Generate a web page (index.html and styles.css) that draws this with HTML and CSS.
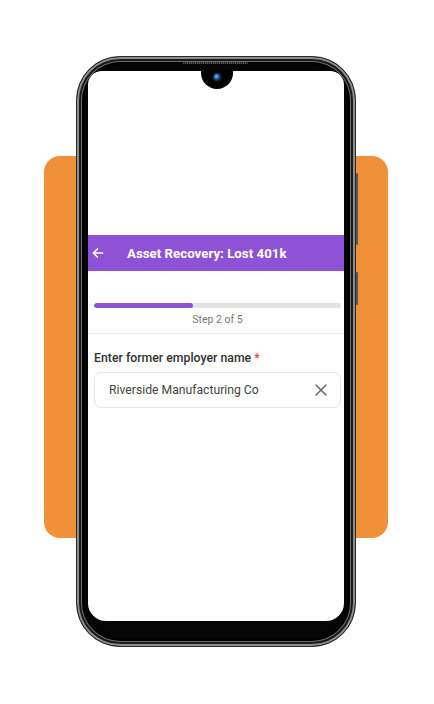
FILE: index.html
```html
<!DOCTYPE html>
<html>
<head>
<meta charset="utf-8">
<link rel="stylesheet" href="styles.css">
</head>
<body>
<div class="stage">
  <div class="backdrop"></div>
  <div class="phone">
    <div class="speaker"></div>
    <div class="side-btn btn-a"></div>
    <div class="side-btn btn-b"></div>
    <div class="screen">
      <div class="notch"><div class="camera"></div></div>
      <div class="spacer"></div>
      <div class="appbar">
        <svg class="back" width="14" height="14" viewBox="0 0 24 24"><path d="M20 12H4M11 5l-7 7 7 7" fill="none" stroke="#fff" stroke-width="2.6" stroke-linecap="round" stroke-linejoin="round"/></svg>
        <span class="title">Asset Recovery: Lost 401k</span>
      </div>
      <div class="progress-wrap">
        <div class="track"><div class="fill" style="width:40%"></div></div>
        <div class="step">Step 2 of 5</div>
      </div>
      <div class="form">
        <div class="label">Enter former employer name <span class="req">*</span></div>
        <div class="input">
          <span class="value">Riverside Manufacturing Co</span>
          <svg class="clear" width="12" height="12" viewBox="0 0 12 12"><path d="M1 1l10 10M11 1L1 11" stroke="#666" stroke-width="1.5" stroke-linecap="round"/></svg>
        </div>
      </div>
    </div>
  </div>
</div>
</body>
</html>
```
FILE: styles.css
```css
html, body { margin: 0; padding: 0; background: #fff; }
body { font-family: Roboto, "Liberation Sans", sans-serif; }
.stage {
  width: 434px; height: 704px;
  display: grid;
  grid-template-columns: 434px;
  grid-template-rows: 704px;
}
.backdrop {
  grid-area: 1 / 1;
  margin: 156px 0 0 44px;
  width: 344px; height: 382px;
  background: #f0913a;
  border-radius: 16px;
}
.phone {
  grid-area: 1 / 1;
  position: relative;
  margin: 56px 0 0 76px;
  width: 280px; height: 591px;
  box-sizing: border-box;
  border-radius: 44px;
  background: #050505;
  border: 1px solid #2a2a2a;
  box-shadow: inset 0 0 0 2px #8d8d8d, inset 0 0 0 4px #1a1a1a, inset 0 0 0 5px #6c6c6c, inset 0 0 0 7px #000;
  padding: 14px 11px 25px 11px;
  display: flex;
}
.speaker {
  position: absolute;
  left: 106px; top: 5px;
  width: 65px; height: 2px;
  background: repeating-linear-gradient(90deg, #555 0 1px, #222 1px 2px);
  border-radius: 1px;
}
.side-btn {
  position: absolute;
  right: -3px;
  width: 2px;
  background: #555;
  border-radius: 1px;
}
.btn-a { top: 116px; height: 72px; }
.btn-b { top: 215px; height: 33px; }
.screen {
  position: relative;
  flex: 1;
  background: #fff;
  border-radius: 14px 14px 18px 18px;
  overflow: hidden;
  display: flex;
  flex-direction: column;
}
.notch {
  position: absolute;
  left: 113px; top: 0;
  width: 32px; height: 18px;
  background: #000;
  border-radius: 0 0 16px 16px;
  display: flex; justify-content: center; align-items: flex-start;
}
.camera {
  margin-top: 2px;
  width: 9px; height: 9px;
  border-radius: 50%;
  background: radial-gradient(circle at 40% 40%, #5aa0e8 0 1.5px, #1d5fb0 2px, #0b2a55 4px, #111 5px);
}
.spacer { height: 164px; flex: none; }
.appbar {
  height: 36px;
  background: #8e52d6;
  display: flex; align-items: center;
  padding-left: 3px;
  gap: 22px;
}
.back { flex: none; }
.title {
  color: #fff;
  font-weight: 700;
  font-size: 13.3px;
}
.progress-wrap {
  padding: 32px 3px 0 6px;
  border-bottom: 1px solid #ececec;
}
.track {
  height: 5px;
  background: #e3e3e3;
  border-radius: 3px;
  overflow: hidden;
}
.fill { height: 100%; background: #8e52d6; border-radius: 3px; }
.step {
  text-align: center;
  font-size: 10.5px;
  color: #777;
  padding: 5px 0 7px;
  line-height: 13px;
}
.form { padding: 17px 3px 0 6px; }
.label {
  font-size: 12.3px;
  font-weight: 500;
  color: #333;
  line-height: 15px;
}
.req { color: #e04646; }
.input {
  margin-top: 6px;
  height: 36px;
  box-sizing: border-box;
  border: 1px solid #e6e6e6;
  border-radius: 7px;
  display: flex; align-items: center; justify-content: space-between;
  padding: 0 13px 0 14px;
}
.value { font-size: 12.2px; color: #444; }
.clear { flex: none; }
```
